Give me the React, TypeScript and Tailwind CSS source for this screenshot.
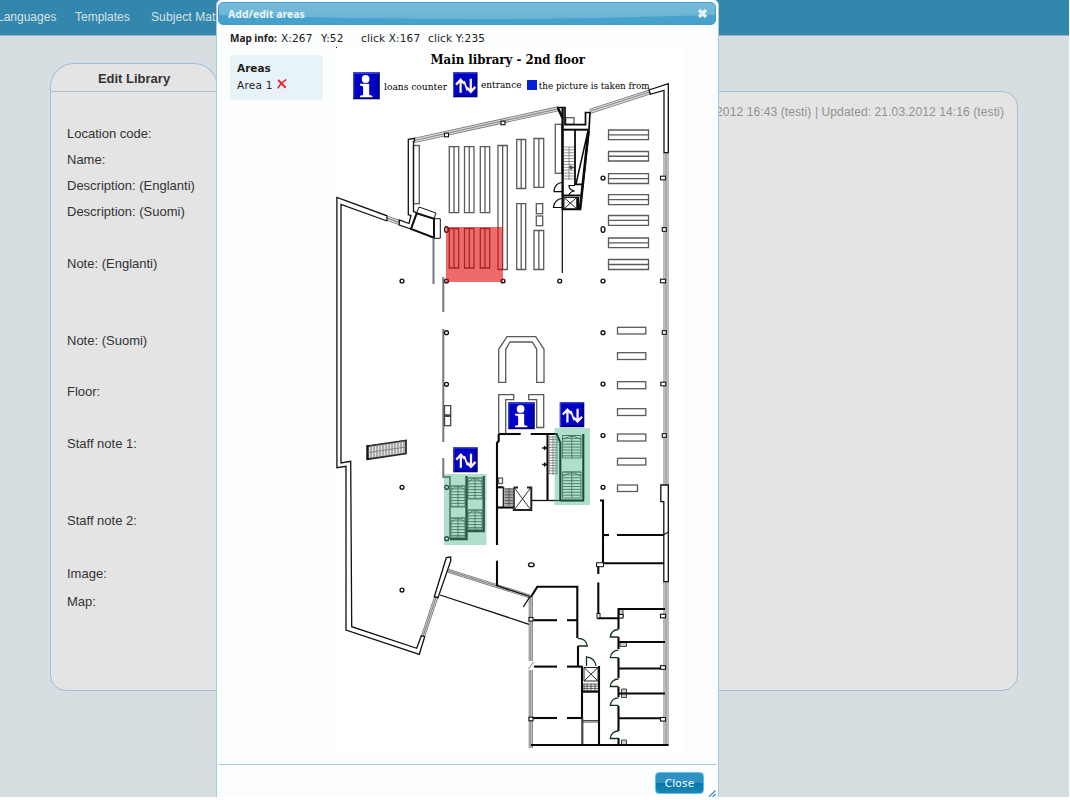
import React from "react";

const fields: [string, string][] = [
  ["Location code:", "h-[26px]"],
  ["Name:", "h-[26px]"],
  ["Description: (Englanti)", "h-[26px]"],
  ["Description: (Suomi)", "h-[52px]"],
  ["Note: (Englanti)", "h-[77px]"],
  ["Note: (Suomi)", "h-[51px]"],
  ["Floor:", "h-[52px]"],
  ["Staff note 1:", "h-[77px]"],
  ["Staff note 2:", "h-[53px]"],
  ["Image:", "h-[28px]"],
  ["Map:", "h-[28px]"],
];

type Box = [number, number, number, number];

const verticalShelves: Box[] = [
  [449.3, 146.7, 458.7, 212.7],
  [464.5, 146.7, 474, 212.7],
  [480.3, 146.7, 489.7, 212.7],
  [449.3, 228.5, 458.7, 268],
  [464.5, 228.5, 474, 268],
  [480.3, 228.5, 489.7, 268],
  [498, 145.5, 507.3, 269.5],
  [516.7, 139.5, 525.7, 188.5],
  [534, 138.5, 543.7, 187.3],
  [516.7, 203.7, 525.7, 269.5],
  [534, 230.5, 543.7, 269.5],
];

const horizontalShelves: [number, number][] = [
  [130, 139.7],
  [151.5, 161],
  [173.7, 183.5],
  [194.6, 204.6],
  [215.5, 225.3],
  [238, 247.7],
  [259.5, 269.5],
];

const plainBoxes: Box[] = [
  [536.3, 203.7, 542.7, 213.7],
  [536.3, 216, 542.7, 225.7],
  [413.5, 145.5, 419.3, 203.7],
  [555.3, 124.3, 561.7, 173.3],
  [565.7, 117.7, 574, 124.3],
  [617.5, 327.3, 645.8, 334],
  [617.5, 352.7, 645.8, 359.5],
  [617.5, 381.7, 645.8, 388.7],
  [617.5, 408.7, 645.8, 415.5],
  [617.5, 434, 645.8, 441],
  [617.5, 458.3, 645.8, 465],
  [617.5, 485, 637.5, 491.5],
  [498.5, 478, 502.5, 483.5],
];

const pillars: [number, number][] = [
  [603, 178], [402, 281], [446.5, 281], [503, 281], [559.7, 281], [603, 281],
  [446.5, 332.7], [446.5, 384.3], [603, 332.7], [603, 384], [603, 435.5],
  [603, 487.3], [402, 487.3], [446.7, 487.3], [446.7, 538.7], [402, 590],
];

const wallPosts: [number, number, number][] = [
  [663, 178, 5], [664.3, 229.5, 4], [663, 281, 5], [664.3, 332.5, 4],
  [663.3, 384, 5], [664.3, 435.5, 4], [663, 616, 5], [663, 667.5, 5],
  [663, 719.3, 5], [446.5, 135, 4], [503, 123, 4], [531, 619.3, 4], [531, 719, 4],
  [621, 616.3, 4],
];

const walls = [
  "M498.7 434H520.7", "M530.7 434H556.7L560.3 442.7V500.5", "M498.7 434V441L497 443V545",
  "M497 560.7V586", "M547.5 434V500.5", "M584 500.5H560", "M583.3 434V500.5",
  "M498 507.5H514", "M498 487.3H503.5", "M600 500.5H603V563", "M603 535H609",
  "M617 535H664", "M603 563.2H664", "M598.3 566V574", "M598.3 582.5V618.2H619",
  "M531 597L537.3 586.8H577.3V638", "M578 646V666.3", "M533.5 620.2H557", "M567 620.2H577",
  "M534 666.6H557", "M567 666.6H582", "M533 718H557", "M567 718H582", "M531 745H668.5",
  "M582 666V718", "M599 666V745", "M583 691.7H599", "M618.5 629V609H665", "M618.5 637V649",
  "M618.5 658V678", "M618.5 687V697", "M618.5 706V731", "M618.5 738V745", "M618 642H665",
  "M618 668.5H661", "M618 693.5H665", "M618 718.2H665",
];

function rungs(x: number, y: number, w: number, h: number, step = 2.9) {
  let d = "";
  for (let i = 0; i <= h; i += step) d += `M${x} ${y + i}h${w}`;
  return d;
}

function Glazing({ x1, y1, x2, y2, w = 4.4 }: { x1: number; y1: number; x2: number; y2: number; w?: number }) {
  const p = { x1, y1, x2, y2 };
  return (
    <g>
      <line {...p} stroke="#777" strokeWidth={w + 0.6} />
      <line {...p} stroke="#ddd" strokeWidth={w - 1} />
      <line {...p} stroke="#8a8a8a" strokeWidth={1.2} />
    </g>
  );
}

function Sign({ x, y, w, h, children }: { x: number; y: number; w: number; h: number; children: React.ReactNode }) {
  return (
    <g transform={`translate(${x} ${y}) scale(${w / 27} ${h / 27})`}>
      <rect width="27" height="27" fill="#000078" />
      <path d="M0 0H27L25.3 1.7H1.7V25.3L0 27Z" fill="#3a49d8" />
      <rect x="1.5" y="1.5" width="23.5" height="23.5" fill="#0202c4" />
      {children}
    </g>
  );
}

function InfoSign({ x, y }: { x: number; y: number }) {
  return (
    <Sign x={x} y={y} w={26.8} h={27}>
      <circle cx="12.7" cy="6.7" r="3.9" fill="#fff" />
      <path d="M7 11.5H16.3V22.2Q16.5 23.3 19.5 23.5V25H7V23.5Q10 23.3 10.2 22.2V14.5Q10 13.2 7 13.1Z" fill="#fff" />
    </Sign>
  );
}

function StairsSign({ x, y }: { x: number; y: number }) {
  return (
    <Sign x={x} y={y} w={24.5} h={25}>
      <g fill="none" stroke="#fff3df" strokeWidth="2.5">
        <path d="M8.4 22V8M3.4 13.3L8.4 8L12.6 12.4" />
        <path d="M19.6 7V20.5M15.4 16.6L19.6 21L24.6 15.7" />
        <path d="M12.2 9.5L15.8 19.5" strokeWidth="1.9" />
      </g>
    </Sign>
  );
}

function StairFlight({ x, y, w, h }: { x: number; y: number; w: number; h: number }) {
  const mid = x + w / 2;
  return (
    <g fill="none" stroke="#555" strokeWidth="0.9">
      <path d={rungs(x, y, w, h)} />
      <path d={`M${x} ${y}H${x + w}V${y + h}H${x}ZM${mid} ${y}V${y + h}`} />
      <path d={`M${x} ${y + 4}L${mid - 2.5} ${y + 1}H${mid + 2.5}L${x + w} ${y + 4}`} />
    </g>
  );
}

function FloorPlan() {
  return (
    <svg className="block bg-white" width="348" height="706" viewBox="336 47 348 706">
      <rect x="336" y="47" width="1" height="1" fill="#0000c8" />
      <g fontFamily="'DejaVu Serif', serif" fill="#000">
        <text x="430.5" y="64" fontSize="12" fontWeight="bold" textLength="154.5" lengthAdjust="spacingAndGlyphs">Main library - 2nd floor</text>
        <text x="384" y="89.5" fontSize="9.3" textLength="63" lengthAdjust="spacingAndGlyphs">loans counter</text>
        <text x="481" y="88" fontSize="9.3" textLength="40.5" lengthAdjust="spacingAndGlyphs">entrance</text>
        <text x="538.7" y="88.5" fontSize="9.3" textLength="111" lengthAdjust="spacingAndGlyphs">the picture is taken from</text>
      </g>
      <rect x="527" y="80" width="10" height="10" fill="#0522d9" />

      <Glazing x1={414} y1={140.5} x2={558} y2={108.8} />
      <Glazing x1={590} y1={111.3} x2={650} y2={91.8} />
      <Glazing x1={387.5} y1={218.3} x2={399.5} y2={222.6} />
      <Glazing x1={666} y1={153} x2={666} y2={485} />
      <Glazing x1={666} y1={582} x2={666} y2={746} />
      <Glazing x1={530.8} y1={597} x2={530.8} y2={661} w={3.6} />
      <Glazing x1={530.8} y1={670} x2={530.8} y2={748} w={3.6} />
      <Glazing x1={423} y1={636.3} x2={436.2} y2={597} w={3.6} />
      <Glazing x1={447.8} y1={570.6} x2={530} y2={596.5} w={3.2} />
      <path d="M528.5 669L533.5 662" stroke="#777" />

      <g fill="none" stroke="#5a5a5a" strokeWidth="1.3">
        {verticalShelves.map(([a, b, c, d]) => (
          <path key={`${a}-${b}`} d={`M${a} ${b}H${c}V${d}H${a}ZM${(a + c) / 2} ${b}V${d}`} />
        ))}
        {horizontalShelves.map(([a, b]) => (
          <path key={a} d={`M608.5 ${a}H648.5V${b}H608.5ZM608.5 ${(a + b) / 2}H648.5`} />
        ))}
        {plainBoxes.map(([a, b, c, d]) => (
          <rect key={`${a}-${b}`} x={a} y={b} width={c - a} height={d - b} />
        ))}
        <path d="M498.7 382.3V349.3L507 336.7H535.7L544 349.3V382.3H536.7V349.3L532.3 342H510L505.7 349.3V382.3Z" />
        <path d="M498.7 433.5V394.7H513.7V399.7H505.7V433.5M528.7 394.7H543.7V427.5H536.7V399.7H528.7Z" />
      </g>

      <g fill="none" stroke="#111" strokeWidth="1.3">
        <path d="M387 221L341 204.5V463L350.7 461.3L351.7 626.7L416.7 648.3L421.3 635.7L424.7 636.7L419.3 654.3L346 630V466.3L336.9 467.7V197.5L387 215.8V221" />
        <path d="M414.5 141.5V138.3L408.3 139.3V214.7L411 215.5L409 223.5L399.3 220V225L411 229L416.7 212.7L413.5 211.7V141" />
        <path d="M416.7 213.3L434 218.7V237.7L411 229Z" strokeWidth="2" />
        <path d="M417 212L419 207L436 213L434 218.7H440.3V238.3H434" strokeWidth="1" />
        <path d="M649 90L668.3 83.7V152.7H664V90.3L650.3 94.3Z" />
        <path d="M668.3 485H660.8V501.7H663.8V581.7H668.3Z" />
        <path d="M663 535L668.5 532" />
        <path d="M434.3 596.7L446.3 557.7L450.7 557V561L438 597.7Z" />
        <path d="M440 595L529 624.3M496.7 585.7L530 596.5L523.3 607" />
        <path d="M532 500.5H560" />
      </g>

      <g fill="none" stroke="#777" strokeWidth="2">
        <path d="M433.5 238V284M443.3 277V312M443.3 329V442M443.3 458V477H450V539" />
      </g>
      <g fill="none" stroke="#444">
        <path d="M444.5 405.7H450.7V415H444.5ZM444.5 416.3H450.7V425.7H444.5Z" strokeWidth="1.3" />
        <path d="M583 720.5H598M583 722H598" />
        <path d="M582.3 718V745" strokeWidth="2.2" />
        <path d="M620 642H626.5V646.5H620ZM621.5 689H626.5V697.5H621.5ZM621.5 693.5H626.5M621.5 740H626.5V745H621.5ZM619 609H623V617H619Z" fill="#ccc" />
      </g>

      <g fill="none" stroke="#0a0a0a">
        <path d="M562.3 273V108" strokeWidth="1.2" />
        <path d="M562.7 210V107" strokeWidth="2.2" />
        <path d="M557 107.5H565V124.7H585.5V112.5H590L589 130L580 209.5H562" strokeWidth="1.7" />
        <path d="M558 108L562.5 118" strokeWidth="2.5" />
        <path d="M562 129.7H588.5" strokeWidth="2" />
        <path d="M588 131L576 184" strokeWidth="1.5" />
        <path d="M588.5 131L580 210" strokeWidth="2.6" />
        <path d="M575 130V184.3H582M562 195.5H580" strokeWidth="1.8" />
        <path d="M569 167.5H574M571 165.5V169.5" strokeWidth="1.3" />
        <path d="M564 197.5H576.7V208.7H564ZL576.7 208.7M576.7 197.5L564 208.7" strokeWidth="0.9" />
        <path d="M578 197V209" strokeWidth="2.4" />
        <path d="M562 191.7H554A8 9 0 0 1 562 182.5M562 207.5H553.5A9 9 0 0 1 562 198.5M575 185.5H569Q569 190 574.5 191Q570 191.5 569 195" strokeWidth="1.2" />
      </g>
      <path d={rungs(564, 147, 10, 33) + "M569 147V180"} stroke="#777" strokeWidth="0.8" />

      <g fill="none" stroke="#080808" strokeWidth="2.1">
        {walls.map((d) => (
          <path key={d} d={d} />
        ))}
      </g>
      <g fill="#fff" stroke="#111">
        <rect x="596.6" y="562.7" width="6.8" height="4" />
        <rect x="597" y="613.5" width="3" height="4.5" />
      </g>

      <g fill="none" stroke="#222">
        <path d="M513.8 487.5H518M527 487.5H531.3V510H513.8V487.5M513.8 510H518M527 510H531.3" strokeWidth="2" />
        <path d="M514.5 488L530.5 509.5M530.5 488L514.5 509.5" strokeWidth="0.9" />
        <path d="M503.5 487V507" strokeWidth="1.6" />
        <path d="M584 667.5H598V681H584ZL598 681M598 667.5L584 681" strokeWidth="1" />
        <path d="M542 448H547M542 464.5H547" strokeWidth="1.4" />
      </g>
      <path d="M544 445.5V450.5L547 448ZM544 462V467L547 464.5Z" fill="#111" />
      <rect x="504.5" y="488" width="8.8" height="18" fill="#aaa" />
      <path d={rungs(504.5, 489, 8.8, 17) + "M509 488V506"} stroke="#555" strokeWidth="0.9" />
      <path d={rungs(549, 437, 8, 38, 2.6) + "M549 436V475M553 436V475M557 436V475"} stroke="#776c72" strokeWidth="0.8" />
      <path d={rungs(583, 684, 15, 7, 2.2) + "M584 684V691M587 684V691M591 684V691M595 684V691"} stroke="#555" strokeWidth="1" />

      <g fill="none" stroke="#10351a" strokeWidth="1.3">
        {[637, 657.7, 686.5, 705.3, 738.5].map((y) => (
          <path key={y} d={`M618.5 ${y}H610.3A8 8 0 0 1 618.5 ${y - 7.5}`} />
        ))}
        <path d="M577.7 638.3Q586.5 638.5 587.3 646H578M586.5 666V656.8Q595 658 596 666" />
      </g>

      <path d="M367.5 446.2L406 440.5V453.5L367.5 459.2Z" fill="#e2e2e2" stroke="#222" strokeWidth="1.7" />
      <path d="M367.5 445V460" stroke="#111" strokeWidth="2.2" />
      {Array.from({ length: 12 }, (_, i) => 371 + i * 3).map((x) => (
        <path key={x} d={`M${x} ${445.7 - (x - 367.5) * 0.148}v13`} stroke="#777" strokeWidth="1" />
      ))}
      <path d="M367.5 452.7L406 447" stroke="#777" strokeWidth="0.8" />

      <StairFlight x={451} y={486} w={14} h={21} />
      <StairFlight x={451} y={518} w={14} h={19} />
      <StairFlight x={468} y={478} w={14} h={21} />
      <StairFlight x={468} y={510} w={14} h={19} />
      <StairFlight x={562.5} y={435.5} w={18.5} h={22.5} />
      <StairFlight x={562.5} y={472} w={18.5} h={26} />
      <path d="M466.5 476V539H450M466.5 531H483.7V476" fill="none" stroke="#222" strokeWidth="2.4" />

      <g fill="#fff" stroke="#111" strokeWidth="1.35">
        {pillars.map(([x, y]) => (
          <circle key={`${x}-${y}`} cx={x} cy={y} r="1.95" />
        ))}
        <ellipse cx="603" cy="229.5" rx="1.9" ry="2.9" />
        <ellipse cx="446.5" cy="229.5" rx="1.9" ry="2.9" />
        <ellipse cx="531.3" cy="564.7" rx="2.8" ry="1.9" />
        {wallPosts.map(([x, y, w]) => (
          <rect key={`${x}-${y}`} x={x - w / 2} y={y - 1.8} width={w} height="3.6" strokeWidth="1.1" />
        ))}
      </g>

      <rect x="446" y="227" width="57" height="55" fill="#e20000" fillOpacity="0.58" />
      <rect x="444" y="474" width="42.5" height="71" fill="#3ab27d" fillOpacity="0.4" />
      <rect x="554.5" y="428" width="35.5" height="77" fill="#3ab27d" fillOpacity="0.4" />

      <InfoSign x={353} y={72.3} />
      <InfoSign x={508} y={402.2} />
      <StairsSign x={453} y={72.3} />
      <StairsSign x={559.8} y={402.2} />
      <StairsSign x={453.2} y={447.3} />
    </svg>
  );
}

function AreaDialog() {
  return (
    <div className="absolute left-[216px] top-0 flex h-[797px] w-[503px] flex-col rounded-t-[5px] border-x border-[#a6c9e2] bg-[#fcfdfd] pl-px pr-[2px] pt-[2px] font-['DejaVu_Sans',sans-serif] text-[10.5px] text-[#222]">
      <div className="relative flex h-[23px] shrink-0 items-center justify-between overflow-hidden rounded-[5px] border border-[#4297d7] bg-gradient-to-b from-[#4ba3cc] to-[#43a2cd] pl-[9px] pr-[7px]">
        <svg className="absolute left-0 top-0" width="498" height="21" viewBox="0 0 498 21">
          <defs>
            <linearGradient id="gloss" x1="0" y1="0" x2="0" y2="1">
              <stop offset="0" stopColor="#79bbda" />
              <stop offset="1" stopColor="#6ab3d4" />
            </linearGradient>
          </defs>
          <path d="M0 0H498V12Q250 20 0 12Z" fill="url(#gloss)" />
        </svg>
        <span className="relative whitespace-nowrap font-['Noto_Sans',sans-serif] text-[10.5px] font-bold leading-5 text-[#eaf5f7]">Add/edit areas</span>
        <svg className="relative" width="11" height="11" viewBox="0 0 11 11">
          <path d="M2 2L9 9M9 2L2 9" stroke="#e4f0fa" strokeWidth="3.2" />
        </svg>
      </div>
      <div className="flex h-[22px] shrink-0 items-center whitespace-nowrap pl-3 pt-[5px] tracking-[0.15px]">
        <b className="w-[51px] font-['Noto_Sans',sans-serif] text-[10px] tracking-normal">Map info:</b>
        <span className="w-10">X:267</span>
        <span className="w-10">Y:52</span>
        <span className="w-[67px]">click X:167</span>
        <span>click Y:235</span>
      </div>
      <div className="flex h-[706px] shrink-0 pl-3">
        <div className="mt-2 mr-[13px] flex h-[45px] w-[93px] flex-col rounded-[3px] bg-[#e8f3f7] pl-[7px] pt-[5px]">
          <b className="h-[17px] text-[10.5px] leading-[17px]">Areas</b>
          <div className="flex h-[17px] items-center gap-1 leading-[17px] tracking-[0.25px]">
            <span>Area 1</span>
            <svg className="mb-1" width="10" height="10" viewBox="0 0 10 10" fill="none" stroke="#e3262b">
              <path d="M1.2 1L8.6 8.8" strokeWidth="2" />
              <path d="M9.4 .6Q4 3.5 .8 9.4" strokeWidth="1.6" />
            </svg>
          </div>
        </div>
        <FloorPlan />
      </div>
      <div className="relative mt-[11px] flex h-[33px] items-start justify-end border-t border-[#a6c9e2] pr-3 pt-[7px]">
        <button className="h-[22px] w-[49px] rounded-[4px] border border-[#5fc0e8] bg-gradient-to-b from-[#2f92c2] from-50% via-[#0078ae] via-50% to-[#1e86b4] text-[10.5px] leading-5 tracking-[0.2px] text-white">Close</button>
        <svg className="absolute bottom-0 right-0" width="8" height="7" viewBox="0 0 8 7">
          <path d="M1 7L7.5 .5M4.5 7L7.5 4" stroke="#3183ba" strokeWidth="1.1" />
        </svg>
      </div>
    </div>
  );
}

export default function App() {
  return (
    <div className="h-[800px] w-[1070px] overflow-hidden bg-white">
      <div className="relative h-[797px] w-[1069px] overflow-hidden bg-[#d7dee1] font-['Liberation_Sans',Arial,sans-serif] text-[13px] text-[#333]">
        <nav className="flex h-9 items-center whitespace-nowrap border-b border-[#9db2bd] bg-[#3387ad] pb-[2px] text-[#d8e2e6]">
          <span className="-ml-[3px] w-[78px] text-[12px]">Languages</span>
          <span className="w-[76px] text-[12px]">Templates</span>
          <span className="text-[12px] tracking-[0.1px]">Subject Matter</span>
        </nav>
        <div className="ml-[50px] mt-[27px] flex h-[29px] w-[168px] items-center justify-center rounded-t-[24px] border border-b-0 border-[#a5c0d6] bg-[#e4e4e4] pt-px font-bold">
          Edit Library
        </div>
        <main className="ml-[50px] -mt-px flex h-[600px] w-[968px] justify-between rounded-[16px] rounded-tl-none border border-[#a5c0d6] bg-[#e4e4e4] pl-4 pr-[13px]">
          <div className="flex flex-col pt-[32px]">
            {fields.map(([label, height]) => (
              <div key={label} className={`${height} shrink-0 whitespace-nowrap leading-5`}>
                {label}
              </div>
            ))}
          </div>
          <p className="pt-[10px] text-[12px] leading-5 tracking-[0.11px] text-[#929292]">Created: 21.03.2012 16:43 (testi) | Updated: 21.03.2012 14:16 (testi)</p>
        </main>
        <AreaDialog />
      </div>
    </div>
  );
}
